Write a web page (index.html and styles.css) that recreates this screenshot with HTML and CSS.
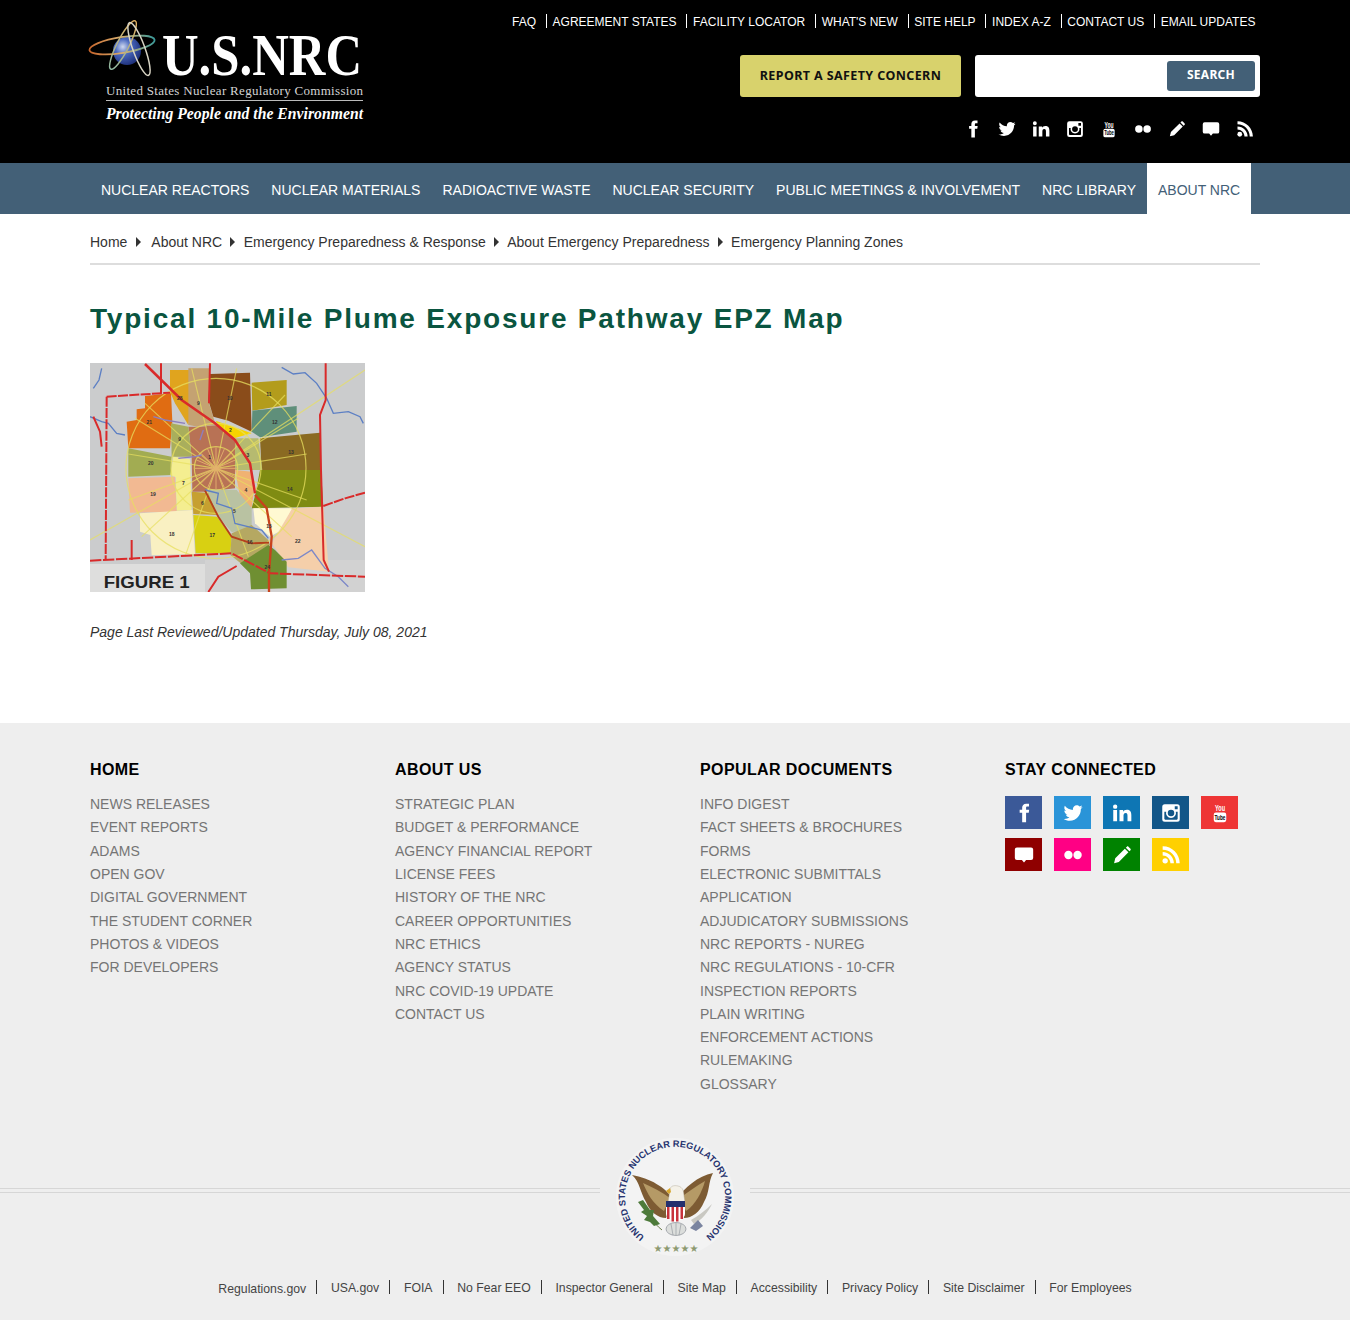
FILE: index.html
```html
<!DOCTYPE html>
<html lang="en">
	<head>
		<meta charset="UTF-8" />
		<meta name="viewport" content="width=device-width, initial-scale=1.0" />
		<title>Typical 10-Mile Plume Exposure Pathway EPZ Map</title>
		<link rel="stylesheet" href="styles.css">
	</head>
	<body>
		<!-- shared social icons -->
		<svg class="icon-defs" xmlns="http://www.w3.org/2000/svg">
			<symbol id="i-facebook" viewBox="0 0 24 24"><path d="M14.500 8V5.800c0-1 .4-1.500 1.600-1.500H18V.8h-3.200C11.300.8 9.800 2.900 9.800 5.500V8H6.800v3.800h3V23.200h4.700V11.800h3.200l.5-3.800z"/></symbol>
			<symbol id="i-twitter" viewBox="0 0 24 24"><path d="M23.500 4.900c-.9.400-1.800.6-2.700.7 1-.6 1.700-1.500 2.100-2.600-.9.500-1.900.9-3 1.100-.9-.9-2.100-1.500-3.400-1.500-2.600 0-4.700 2.100-4.700 4.700 0 .4 0 .7.1 1.100-3.900-.2-7.400-2.100-9.700-5-.4.700-.6 1.500-.6 2.400 0 1.600.8 3 2.100 3.900-.8 0-1.500-.2-2.100-.6v.1c0 2.300 1.600 4.200 3.800 4.600-.4.100-.8.200-1.200.2-.3 0-.6 0-.9-.1.600 1.900 2.300 3.200 4.400 3.300-1.600 1.300-3.600 2-5.800 2-.4 0-.8 0-1.100-.1 2.100 1.300 4.600 2.100 7.200 2.100 8.700 0 13.400-7.200 13.400-13.400v-.6c.9-.7 1.700-1.500 2.100-2.400z"/></symbol>
			<symbol id="i-linkedin" viewBox="0 0 24 24"><path d="M1.500 8.500h4.600V22H1.500zM3.800 1.800a2.600 2.600 0 1 1 0 5.200 2.600 2.600 0 0 1 0-5.200zM9 8.500h4.400v1.900c.7-1.200 2.200-2.300 4.400-2.300 4.600 0 5.400 3 5.400 6.900V22h-4.600v-6.200c0-1.600 0-3.700-2.200-3.700s-2.600 1.800-2.600 3.600V22H9z"/></symbol>
			<symbol id="i-instagram" viewBox="0 0 24 24"><path fill-rule="evenodd" d="M4.500 1.500h15a3 3 0 0 1 3 3v15a3 3 0 0 1-3 3h-15a3 3 0 0 1-3-3v-15a3 3 0 0 1 3-3zM16.500 4v3.500H20V4zM4 10.500V19c0 .6.400 1 1 1h14c.6 0 1-.4 1-1v-8.500h-2.200a6 6 0 1 1-11.600 0zM12 8.200a3.900 3.900 0 1 0 0 7.800 3.900 3.900 0 0 0 0-7.800z"/></symbol>
			<symbol id="i-youtube" viewBox="0 0 24 24"><text class="yt-you" x="6" y="10" textLength="12" lengthAdjust="spacingAndGlyphs">You</text><rect x="4.500" y="11.500" width="15" height="11.500" rx="2.500"/><text class="yt-tube" x="5.500" y="20.500" textLength="13" lengthAdjust="spacingAndGlyphs">Tube</text></symbol>
			<symbol id="i-flickr" viewBox="0 0 24 24"><circle cx="6.500" cy="12" r="5"/><circle cx="17.500" cy="12" r="5"/></symbol>
			<symbol id="i-pencil" viewBox="0 0 24 24"><path d="M2.500 21.800l1.400-5.800L15.400 4.500l4.300 4.300L8.200 20.300zM16.600 3.300l1.300-1.300c.5-.5 1.300-.5 1.800 0l2.500 2.500c.5.500.5 1.300 0 1.800l-1.300 1.300z"/></symbol>
			<symbol id="i-comment" viewBox="0 0 24 24"><path d="M3.500 3h17A2.500 2.500 0 0 1 23 5.500v10a2.500 2.500 0 0 1-2.500 2.500H14.500L12 21l-2.500-3h-6A2.500 2.500 0 0 1 1 15.500v-10A2.500 2.500 0 0 1 3.500 3z"/></symbol>
			<symbol id="i-rss" viewBox="0 0 24 24"><circle cx="5" cy="19" r="3.200"/><path d="M2 8.500v4.200c5 0 9.300 4.300 9.300 9.300h4.200C15.500 14.600 9.400 8.500 2 8.500zM2 1.500v4.200c9 0 16.300 7.300 16.300 16.300h4.200C22.500 10.700 13.300 1.500 2 1.500z"/></symbol>
		</svg>

		<header class="site-header">
			<div class="wrap header-inner">
				<a href="#" class="logo">
					<svg width="273" height="102" viewBox="0 0 273 102" xmlns="http://www.w3.org/2000/svg">
						<defs>
							<radialGradient id="globe" cx="35%" cy="35%" r="70%">
								<stop offset="0" stop-color="#cfd8ee" />
								<stop offset="0.4" stop-color="#4a69c0" />
								<stop offset="1" stop-color="#1d2f78" />
							</radialGradient>
							<linearGradient id="orbitA" x1="0" x2="1" y1="0" y2="0">
								<stop offset="0" stop-color="#c8662c" />
								<stop offset="0.5" stop-color="#d8b070" />
								<stop offset="1" stop-color="#3b9a9a" />
							</linearGradient>
							<linearGradient id="orbitB" x1="0" x2="1" y1="0" y2="0">
								<stop offset="0" stop-color="#8fb6a0" />
								<stop offset="1" stop-color="#e0b060" />
							</linearGradient>
						</defs>
						<circle cx="37" cy="31" r="14" fill="url(#globe)" />
						<ellipse cx="32" cy="25" rx="33" ry="8" fill="none" stroke="url(#orbitA)" stroke-width="1.800" transform="rotate(-9 32 25)" />
						<ellipse cx="33" cy="25" rx="27" ry="6" fill="none" stroke="url(#orbitB)" stroke-width="1.500" transform="rotate(-63 33 25)" />
						<ellipse cx="49" cy="29" rx="28" ry="6" fill="none" stroke="#d8d4c4" stroke-width="1.500" transform="rotate(70 49 29)" />
						<text class="logo-main" x="72" y="55" textLength="200" lengthAdjust="spacingAndGlyphs">U.S.NRC</text>
						<text class="logo-sub" x="16" y="74.500" textLength="257" lengthAdjust="spacing">United States Nuclear Regulatory Commission</text>
						<rect x="16" y="80" width="257" height="1" fill="#bbb" />
						<text class="logo-tag" x="16" y="98.500" textLength="257" lengthAdjust="spacingAndGlyphs">Protecting People and the Environment</text>
					</svg>
				</a>
				<div class="header-right">
					<ul class="top-links">
						<li><a href="#">FAQ</a></li>
						<li><a href="#">Agreement States</a></li>
						<li><a href="#">Facility Locator</a></li>
						<li><a href="#">What's New</a></li>
						<li><a href="#">Site Help</a></li>
						<li><a href="#">Index A-Z</a></li>
						<li><a href="#">Contact Us</a></li>
						<li><a href="#">Email Updates</a></li>
					</ul>
					<div class="header-tools">
						<a href="#" class="report-btn">REPORT A SAFETY CONCERN</a>
						<form class="search-box">
							<input type="text" aria-label="Search" />
							<button type="button">SEARCH</button>
						</form>
					</div>
					<div class="header-social">
						<a href="#"><svg><use href="#i-facebook" /></svg></a>
						<a href="#"><svg><use href="#i-twitter" /></svg></a>
						<a href="#"><svg><use href="#i-linkedin" /></svg></a>
						<a href="#"><svg><use href="#i-instagram" /></svg></a>
						<a href="#" class="yt-dark"><svg><use href="#i-youtube" /></svg></a>
						<a href="#"><svg><use href="#i-flickr" /></svg></a>
						<a href="#"><svg><use href="#i-pencil" /></svg></a>
						<a href="#"><svg><use href="#i-comment" /></svg></a>
						<a href="#"><svg><use href="#i-rss" /></svg></a>
					</div>
				</div>
			</div>
		</header>

		<nav class="main-nav">
			<ul class="wrap">
				<li><a href="#">Nuclear Reactors</a></li>
				<li><a href="#">Nuclear Materials</a></li>
				<li><a href="#">Radioactive Waste</a></li>
				<li><a href="#">Nuclear Security</a></li>
				<li><a href="#">Public Meetings &amp; Involvement</a></li>
				<li><a href="#">NRC Library</a></li>
				<li class="active"><a href="#">About NRC</a></li>
			</ul>
		</nav>

		<main class="wrap">
			<ol class="breadcrumb">
				<li><a href="#">Home</a></li>
				<li><a href="#">About NRC</a></li>
				<li><a href="#">Emergency Preparedness &amp; Response</a></li>
				<li><a href="#">About Emergency Preparedness</a></li>
				<li><a href="#">Emergency Planning Zones</a></li>
			</ol>

			<h1>Typical 10-Mile Plume Exposure Pathway EPZ Map</h1>

			<svg class="epz-map" width="275" height="229" viewBox="15 9 825 687" xmlns="http://www.w3.org/2000/svg" role="img" aria-label="Emergency planning zone map">
				<rect x="15" y="9" width="825" height="687" fill="#cbcccd" />
				<rect x="15" y="612" width="345" height="84" fill="#dededd" />
				<rect x="360" y="600" width="480" height="96" fill="#d2d2d2" />

				<!-- zones -->
				<g>
					<polygon fill="#e0a41e" points="255,30 320,30 322,130 310,195 270,130 255,95" />
					<polygon fill="#c4a272" points="310,25 375,25 372,130 392,195 340,200 310,195" />
					<polygon fill="#8a4c1a" points="375,42 495,38 500,215 430,182 385,170 370,120" />
					<polygon fill="#b39c1c" points="500,68 605,60 605,135 502,152" />
					<polygon fill="#5f8f7a" points="502,152 635,138 635,215 525,232 500,215" />
					<polygon fill="#f6d400" points="392,182 500,220 450,234 405,205" />
					<polygon fill="#8a6a22" points="525,235 705,218 707,330 530,330" />
					<polygon fill="#7f8b12" points="525,330 708,330 715,440 500,445 512,400" />
					<polygon fill="#b6ba70" points="450,235 520,235 532,330 450,330" />
					<polygon fill="#b87255" points="345,200 400,195 450,235 450,330 450,385 365,395 322,395 320,290 310,200" />
					<polygon fill="#e06c12" points="180,108 258,100 262,185 255,265 130,265 125,185 155,180 155,148 180,145" />
					<polygon fill="#a9ae5c" points="258,190 310,200 320,290 260,290" />
					<polygon fill="#a2ac52" points="130,265 260,290 258,345 130,350" />
					<polygon fill="#f4ee90" points="265,290 315,298 320,450 275,452 272,352 256,345" />
					<polygon fill="#f2b992" points="130,355 270,350 275,455 135,458" />
					<polygon fill="#f9f0c2" points="165,460 322,450 330,582 200,586 196,525 165,515" />
					<polygon fill="#c6a030" points="320,395 385,400 396,465 325,462" />
					<polygon fill="#d8d012" points="325,465 396,470 440,530 436,580 332,580" />
					<polygon fill="#f0b272" points="450,330 500,335 505,405 500,442 470,435" />
					<polygon fill="#b9c2a2" points="365,388 455,390 500,445 500,510 440,516 396,465" />
					<polygon fill="#fff9d2" points="505,445 622,445 590,510 555,530 510,490" />
					<polygon fill="#f5cfaa" points="622,445 715,440 732,635 610,622 560,550" />
					<polygon fill="#b5a862" points="440,520 500,495 550,540 555,555 470,612 436,585" />
					<polygon fill="#6f8f32" points="465,610 550,555 570,570 605,605 605,685 498,688 495,640" />
				</g>

				<!-- rings and rays -->
				<g fill="none" stroke="#e8e060" stroke-width="3.500" opacity="0.75">
					<circle cx="393" cy="325" r="65" />
					<circle cx="393" cy="325" r="135" />
					<circle cx="393" cy="325" r="270" />
				</g>
				<g stroke="#e8e060" stroke-width="3.500" opacity="0.7">
					<path d="M393 325L130 282M393 325L665 282M393 325L320 25M393 325L455 25M393 325L150 175M393 325L640 175" />
					<path d="M393 325L130 420M393 325L665 420M393 325L300 590M393 325L490 590M393 325L170 530M393 325L620 530" />
					<path d="M393 325L180 130M393 325L600 105M393 325L15 540M393 325L840 30M393 325L840 560" />
				</g>
				<g stroke="#e6b070" stroke-width="3" opacity="0.9">
					<path d="M393 325L330 325M393 325L456 325M393 325L393 262M393 325L393 388M393 325L348 280M393 325L438 370M393 325L438 280M393 325L348 370" />
					<path d="M393 325L335 300M393 325L451 350M393 325L335 350M393 325L451 300M393 325L368 267M393 325L418 383M393 325L418 267M393 325L368 383" />
				</g>

				<!-- rivers -->
				<g fill="none" stroke="#5c7fc4" stroke-width="4">
					<path d="M590 22L625 42L660 38L695 70L725 115L745 160L790 155L825 170L835 190" />
					<path d="M15 170L50 185L70 190L95 220L120 225" />
					<path d="M50 25L42 60L25 85" />
					<path d="M360 390L400 400L395 430L440 445L450 490L530 510L550 535" />
					<path d="M280 295L330 290L350 285M205 170L240 180L300 190M355 210L345 240" stroke="#8c7ec0" />
					<path d="M590 600L640 595L680 570L720 625L760 650L790 680" stroke="#7d88c8" />
				</g>

				<!-- roads -->
				<g fill="none" stroke="#d92a2a" stroke-width="6">
					<path d="M15 602L440 580L555 640L840 650" stroke-dasharray="34 5" />
					<path d="M65 110L255 98M65 110L62 600" stroke-dasharray="30 4" />
					<path d="M722 10L722 120L705 165L708 330L716 600L732 635" />
					<path d="M715 438L780 415L840 398" stroke-dasharray="30 4" />
					<path d="M375 10L372 130M228 10L228 100M140 540L140 600" />
					<path d="M180 12L290 120L390 190L450 240L495 310L510 400" stroke-width="7.500" />
					<path d="M510 405L545 445L560 530L552 640L552 696" stroke="#c8421c" stroke-width="7" />
					<path d="M360 392L400 470L440 530L500 550L552 548" stroke="#b5401c" stroke-width="5.500" />
					<path d="M370 696L400 650L455 618M25 170L45 215L50 260" />
				</g>

				<g class="map-labels">
					<text x="284" y="120">28</text><text x="340" y="135">9</text><text x="434" y="120">10</text>
					<text x="552" y="107">11</text><text x="569" y="192">12</text><text x="436" y="217">2</text>
					<text x="618" y="281">13</text><text x="614" y="394">14</text><text x="489" y="291">3</text>
					<text x="374" y="296">1</text><text x="193" y="193">21</text><text x="284" y="244">9</text>
					<text x="197" y="314">20</text><text x="295" y="375">7</text><text x="204" y="409">19</text>
					<text x="260" y="529">18</text><text x="352" y="435">6</text><text x="382" y="530">17</text>
					<text x="483" y="395">4</text><text x="448" y="459">5</text><text x="552" y="503">15</text>
					<text x="638" y="549">22</text><text x="494" y="553">16</text><text x="547" y="628">24</text>
				</g>
				<text class="map-figure" x="56" y="684" textLength="258" lengthAdjust="spacingAndGlyphs">FIGURE 1</text>
			</svg>

			<p class="reviewed">Page Last Reviewed/Updated Thursday, July 08, 2021</p>
		</main>

		<footer class="site-footer">
			<div class="wrap footer-cols">
				<div class="footer-col">
					<h3>Home</h3>
					<ul>
						<li><a href="#">News Releases</a></li>
						<li><a href="#">Event Reports</a></li>
						<li><a href="#">ADAMS</a></li>
						<li><a href="#">Open Gov</a></li>
						<li><a href="#">Digital Government</a></li>
						<li><a href="#">The Student Corner</a></li>
						<li><a href="#">Photos &amp; Videos</a></li>
						<li><a href="#">For Developers</a></li>
					</ul>
				</div>
				<div class="footer-col">
					<h3>About Us</h3>
					<ul>
						<li><a href="#">Strategic Plan</a></li>
						<li><a href="#">Budget &amp; Performance</a></li>
						<li><a href="#">Agency Financial Report</a></li>
						<li><a href="#">License Fees</a></li>
						<li><a href="#">History of the NRC</a></li>
						<li><a href="#">Career Opportunities</a></li>
						<li><a href="#">NRC Ethics</a></li>
						<li><a href="#">Agency Status</a></li>
						<li><a href="#">NRC COVID-19 Update</a></li>
						<li><a href="#">Contact Us</a></li>
					</ul>
				</div>
				<div class="footer-col">
					<h3>Popular Documents</h3>
					<ul>
						<li><a href="#">Info Digest</a></li>
						<li><a href="#">Fact Sheets &amp; Brochures</a></li>
						<li><a href="#">Forms</a></li>
						<li><a href="#">Electronic Submittals</a></li>
						<li><a href="#">Application</a></li>
						<li><a href="#">Adjudicatory Submissions</a></li>
						<li><a href="#">NRC Reports - NUREG</a></li>
						<li><a href="#">NRC Regulations - 10-CFR</a></li>
						<li><a href="#">Inspection Reports</a></li>
						<li><a href="#">Plain Writing</a></li>
						<li><a href="#">Enforcement Actions</a></li>
						<li><a href="#">Rulemaking</a></li>
						<li><a href="#">Glossary</a></li>
					</ul>
				</div>
				<div class="footer-col">
					<h3>Stay Connected</h3>
					<div class="footer-social">
						<a href="#" class="bg-facebook"><svg><use href="#i-facebook" /></svg></a>
						<a href="#" class="bg-twitter"><svg><use href="#i-twitter" /></svg></a>
						<a href="#" class="bg-linkedin"><svg><use href="#i-linkedin" /></svg></a>
						<a href="#" class="bg-instagram"><svg><use href="#i-instagram" /></svg></a>
						<a href="#" class="bg-youtube"><svg><use href="#i-youtube" /></svg></a>
						<a href="#" class="bg-comment"><svg><use href="#i-comment" /></svg></a>
						<a href="#" class="bg-flickr"><svg><use href="#i-flickr" /></svg></a>
						<a href="#" class="bg-pencil"><svg><use href="#i-pencil" /></svg></a>
						<a href="#" class="bg-rss"><svg><use href="#i-rss" /></svg></a>
					</div>
				</div>
			</div>

			<div class="seal-row">
				<span class="seal-line"></span>
				<svg class="seal" width="150" height="130" viewBox="0 0 150 130" xmlns="http://www.w3.org/2000/svg" role="img" aria-label="NRC seal">
					<defs>
						<path id="sealRing" d="M44.500 104.500A50 50 0 1 1 105.500 104.500" />
					</defs>
					<circle cx="75" cy="65" r="59" fill="#f3f3f3" />
					<text class="seal-text"><textPath href="#sealRing">UNITED STATES NUCLEAR REGULATORY COMMISSION</textPath></text>
					<!-- wings -->
					<path d="M72 66C66 56 50 46 32 43C40 50 40 60 46 70C50 80 58 86 66 86L70 74z" fill="#7d5b33" />
					<path d="M78 66C84 56 98 44 113 41C108 50 110 60 104 70C100 80 92 86 84 86L80 74z" fill="#7d5b33" />
					<path d="M70 66C62 60 52 55 43 51C47 61 53 72 64 79z" fill="#b59a66" />
					<path d="M80 66C88 60 96 54 105 49C102 60 96 72 86 79z" fill="#b59a66" />
					<!-- head -->
					<path d="M70 58C70 54 74 53 78 54C83 55 84 60 84 64L85 70H68z" fill="#f4f1e8" stroke="#a8a08c" stroke-width="0.400" />
					<path d="M70 56L66 59L69 62L71 60z" fill="#d8a830" />
					<!-- shield -->
					<path d="M66 69H85V82C85 86 79 89 75.500 90C72 89 66 86 66 82z" fill="#fff" />
					<path d="M66 69H85V75H66z" fill="#24306e" />
					<path d="M67 75h2.500v12h-2.500zM71.500 75h2.500v14.500h-2.500zM76 75h2.500v14.500h-2.500zM80.500 75h2.500v12h-2.500z" fill="#c8323c" />
					<!-- branch, arrows, tail -->
					<path d="M42 70C46 80 52 90 62 98" fill="none" stroke="#6a7a4a" stroke-width="1" />
					<path d="M38 70L43 68L50 78L54 78L53 84L60 92L54 94L50 90L44 88L47 84L41 80L44 78z" fill="#4d7a3a" />
					<path d="M112 72C108 80 102 88 94 92L91 88C98 84 106 78 112 72z" fill="#c9c8c2" />
					<path d="M90 96L98 88L103 94L96 99z" fill="#7a84a0" />
					<ellipse cx="76" cy="97" rx="10" ry="6.500" fill="#dcdedc" stroke="#7a8088" stroke-width="0.600" />
					<path d="M76 91V103M71 92L73 103M81 92L79 103" stroke="#7a8088" stroke-width="0.500" />
					<text class="seal-stars" x="76" y="120">★★★★★</text>
				</svg>
				<span class="seal-line"></span>
			</div>

			<ul class="bottom-links">
				<li class="first"><a href="#">Regulations.gov</a></li>
				<li><a href="#">USA.gov</a></li>
				<li><a href="#">FOIA</a></li>
				<li><a href="#">No Fear EEO</a></li>
				<li><a href="#">Inspector General</a></li>
				<li><a href="#">Site Map</a></li>
				<li><a href="#">Accessibility</a></li>
				<li><a href="#">Privacy Policy</a></li>
				<li><a href="#">Site Disclaimer</a></li>
				<li><a href="#">For Employees</a></li>
			</ul>
		</footer>
	</body>
</html>
```
FILE: styles.css
```css
:root {
	--slate: #436077;
	--footer-bg: #eeeeee;
	--footer-text: #757575;
	--green: #0a5540;
	--text: #333;
}

* {
	box-sizing: border-box;
}

body {
	margin: 0;
	font-family: 'Liberation Sans', Arial, sans-serif;
	font-size: 14px;
	color: var(--text);
	background: #fff;
}

a {
	color: inherit;
	text-decoration: none;
}

ul,
ol {
	list-style: none;
	margin: 0;
	padding: 0;
}

.icon-defs {
	display: none;
}

.wrap {
	width: 1170px;
	margin: 0 auto;
}

/* header */
.site-header {
	background: #000;
	height: 163px;
}

.header-inner {
	display: flex;
	justify-content: space-between;
}

.logo {
	display: block;
	margin-top: 20px;
	height: 102px;
}

.logo svg {
	display: block;
	overflow: visible;
}

.logo-main {
	font-family: 'Liberation Serif', serif;
	font-size: 59px;
	font-weight: bold;
	fill: #fff;
}

.logo-sub {
	font-family: 'Liberation Serif', serif;
	font-size: 13px;
	fill: #d4d4d4;
}

.logo-tag {
	font-family: 'Liberation Serif', serif;
	font-size: 17px;
	font-style: italic;
	font-weight: bold;
	fill: #fff;
}

.header-right {
	display: flex;
	flex-direction: column;
	align-items: flex-end;
}

.top-links {
	display: flex;
	margin-top: 14px;
	padding-right: 4.600px;
	color: #fff;
	font-size: 12px;
	line-height: 16px;
	text-transform: uppercase;
}

.top-links li + li {
	margin-left: 9.900px;
	padding-left: 6.630px;
	position: relative;
}

.top-links li + li::before {
	content: '';
	position: absolute;
	left: 0;
	top: 0;
	width: 1px;
	height: 14px;
	background: #fff;
}

.header-tools {
	display: flex;
	gap: 14px;
	margin-top: 25px;
}

.report-btn {
	display: block;
	width: 221px;
	height: 42px;
	line-height: 41px;
	text-align: center;
	background: #d8d26c;
	border-radius: 3px;
	color: #111;
	font-family: 'Noto Sans', sans-serif;
	font-size: 12.500px;
	font-weight: 700;
	letter-spacing: 0.400px;
}

.search-box {
	display: flex;
	justify-content: flex-end;
	align-items: center;
	width: 285px;
	height: 42px;
	padding-right: 5px;
	background: #fff;
	border-radius: 3px;
}

.search-box input {
	flex: 1;
	min-width: 0;
	height: 100%;
	border: none;
	background: none;
	outline: none;
}

.search-box button {
	width: 88px;
	height: 30px;
	padding: 0 0 3px;
	border: none;
	border-radius: 3px;
	background: var(--slate);
	color: #fff;
	font-family: 'Noto Sans', sans-serif;
	font-size: 12px;
	font-weight: 700;
	letter-spacing: 0.300px;
}

.header-social {
	display: flex;
	gap: 16px;
	margin-top: 23px;
	padding-right: 6px;
}

.header-social a {
	display: block;
	width: 18px;
	height: 18px;
	color: #fff;
}

.header-social svg {
	display: block;
	width: 18px;
	height: 18px;
	fill: currentColor;
}

.yt-you,
.yt-tube {
	font-family: 'Liberation Sans', sans-serif;
	font-weight: bold;
}

.yt-you {
	font-size: 11.500px;
	fill: #fff;
}

.yt-tube {
	font-size: 8.500px;
	fill: #000;
}

.bg-youtube .yt-tube {
	fill: #ee3535;
}

/* main nav */
.main-nav {
	background: var(--slate);
	height: 51px;
}

.main-nav ul {
	display: flex;
}

.main-nav li {
	flex: none;
}

.main-nav a {
	display: block;
	height: 51px;
	padding: 0 11px;
	line-height: 54px;
	font-size: 14px;
	color: #fff;
	white-space: nowrap;
	text-transform: uppercase;
}

.main-nav .active a {
	background: #fff;
	color: var(--slate);
}

/* content */
.breadcrumb {
	display: flex;
	align-items: center;
	height: 51px;
	padding-top: 6px;
	border-bottom: 2px solid #ddd;
}

.breadcrumb li + li {
	display: flex;
	align-items: center;
}

.breadcrumb li + li::before {
	content: '';
	width: 0;
	height: 0;
	margin: 0 8.500px 0 8px;
	border-left: 5px solid #333;
	border-top: 5px solid transparent;
	border-bottom: 5px solid transparent;
}

.breadcrumb li:nth-child(2)::before {
	margin: 0 10px 0 9px;
}

h1 {
	margin: 36px 0 26px;
	font-size: 28px;
	line-height: 36px;
	letter-spacing: 1.800px;
	color: var(--green);
}

.epz-map {
	display: block;
}

.map-labels text {
	font-family: 'Liberation Sans', sans-serif;
	font-size: 15px;
	font-weight: bold;
	fill: #333;
	text-anchor: middle;
}

.map-figure {
	font-family: 'Liberation Sans', sans-serif;
	font-size: 50px;
	font-weight: bold;
	fill: #222;
}

.reviewed {
	margin: 32px 0 83px;
	font-style: italic;
	line-height: 16px;
}

/* footer */
.site-footer {
	background: var(--footer-bg);
	color: var(--footer-text);
	height: 597px;
	padding-top: 37px;
}

.footer-cols {
	display: flex;
	height: 372px;
}

.footer-col {
	width: 305px;
}

.footer-col:last-child {
	width: 255px;
}

.footer-col h3 {
	margin: 0 0 13.200px;
	font-size: 16px;
	line-height: 20px;
	letter-spacing: 0.400px;
	color: #000;
	text-transform: uppercase;
}

.footer-col li {
	line-height: 23.300px;
	text-transform: uppercase;
}

.footer-social {
	display: flex;
	flex-wrap: wrap;
	gap: 9px 12px;
	margin-top: 16px;
}

.footer-social a {
	display: flex;
	align-items: center;
	justify-content: center;
	width: 37px;
	height: 33px;
	color: #fff;
}

.footer-social svg {
	width: 20px;
	height: 20px;
	fill: currentColor;
}

.bg-facebook { background: #3b5998; }
.bg-twitter { background: #2a94d8; }
.bg-linkedin { background: #0e76b4; }
.bg-instagram { background: #125688; }
.bg-youtube { background: #ee3535; }
.bg-comment { background: #8f0000; }
.bg-flickr { background: #ff0084; }
.bg-pencil { background: #008200; }
.bg-rss { background: #ffd000; }

.seal-row {
	display: flex;
	align-items: center;
}

.seal-line {
	flex: 1;
	height: 5px;
	margin-top: -14px;
	border-top: 1px solid #d6d6d6;
	border-bottom: 1px solid #d6d6d6;
}

.seal {
	display: block;
}

.seal-text {
	font-family: 'Liberation Sans', sans-serif;
	font-size: 9.200px;
	font-weight: bold;
	fill: #27346f;
}

.seal-stars {
	font-family: 'DejaVu Sans', sans-serif;
	font-size: 10px;
	fill: #8d9a70;
	text-anchor: middle;
}

.bottom-links {
	display: flex;
	justify-content: center;
	margin-top: 16px;
	font-size: 12.250px;
	line-height: 20px;
	color: #444;
}

.bottom-links li + li {
	margin-left: 10px;
	padding-left: 14.700px;
	position: relative;
}

.bottom-links li + li::before {
	content: '';
	position: absolute;
	left: 0;
	top: 2px;
	width: 1px;
	height: 14px;
	background: #333;
}

.bottom-links .first a {
	position: relative;
	top: 1px;
}
```
